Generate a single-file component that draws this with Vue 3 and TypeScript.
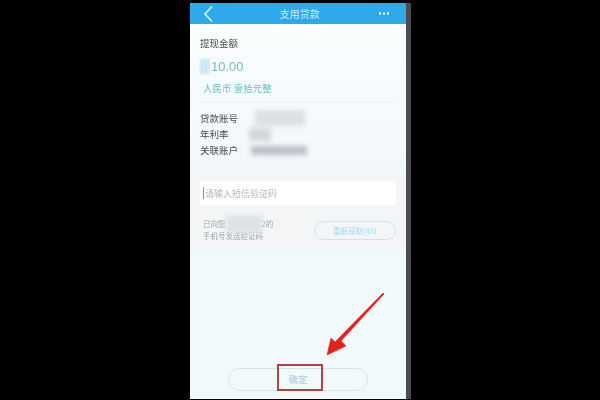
<script setup lang="ts">
const rows = [
  { label: '贷款账号', blur: 'w-a' },
  { label: '年利率', blur: 'w-b' },
  { label: '关联账户', blur: 'w-c' },
]
</script>

<template>
  <div class="page">
    <div class="phone">
      <header class="nav">
        <svg class="back" width="12" height="18" viewBox="0 0 12 18">
          <path d="M10 1.5 L3 9 L10 16.5" fill="none" stroke="#cfeefb" stroke-width="1.8" />
        </svg>
        <span class="title">支用贷款</span>
        <span class="more"><i></i><i></i><i></i></span>
      </header>

      <section class="summary">
        <div class="caption">提现金额</div>
        <div class="amount"><span class="mask"></span>10.00</div>
        <div class="cn">人民币 壹拾元整</div>
        <div class="rule"></div>
        <div v-for="row in rows" :key="row.label" class="row">
          <span class="label">{{ row.label }}</span>
          <span class="smudge" :class="row.blur"></span>
        </div>
      </section>

      <section class="verify">
        <div class="field"><span class="cursor"></span><span class="hint">请输入短信验证码</span></div>
        <div class="sms">
          <div class="sms-text">
            <div>已向您<span class="sms-mask"></span>2的</div>
            <div>手机号发送验证码</div>
          </div>
          <div class="resend">重新获取(45)</div>
        </div>
      </section>

      <footer class="actions">
        <div class="confirm">确定</div>
      </footer>

      <svg class="arrow" width="70" height="70" viewBox="0 0 70 70">
        <path d="M65 3 L22 50 L27 55 L8 64 L12 47 L16 51 L64 2 Z" fill="#e0231f" stroke="#e0231f" stroke-width="0.6" />
      </svg>
      <div class="highlight"></div>
    </div>
    <div class="edge"></div>
  </div>
</template>

<style>
html, body { margin: 0; background: #000; }
</style>

<style scoped>
.page {
  width: 600px;
  height: 400px;
  background: #000;
  display: flex;
  justify-content: center;
  padding: 3px 0 1px 1px;
  box-sizing: border-box;
  overflow: hidden;
  font-family: "Noto Sans CJK SC", "Liberation Sans", sans-serif;
}
.phone {
  position: relative;
  width: 216px;
  display: flex;
  flex-direction: column;
  background: #f1f9fb;
}
.edge {
  width: 5px;
  background: #4a4d50;
}
.nav {
  height: 21px;
  flex: none;
  background: #2ea9ea;
  display: flex;
  align-items: center;
  justify-content: space-between;
  padding: 0 17px 0 12px;
  color: #cfeefb;
  font-size: 10px;
}
.title { filter: blur(0.7px); margin-left: 7px; }
.more { display: flex; gap: 1.5px; filter: blur(0.3px); }
.more i { width: 2.5px; height: 2.5px; border-radius: 50%; background: #d8f2fd; }
.summary {
  height: 148px;
  flex: none;
  padding: 12px 10px 0;
  box-sizing: border-box;
  background: linear-gradient(#fbfdfe, #f1f8fb);
  color: #4a4a4a;
  font-size: 9.5px;
}
.caption { line-height: 14px; filter: blur(0.65px); }
.amount {
  display: flex;
  align-items: center;
  margin-top: 7px;
  height: 18px;
  font-size: 13px;
  color: #6fc2c4;
  filter: blur(0.5px);
  font-family: "Liberation Sans", sans-serif;
}
.mask {
  width: 10px;
  height: 15px;
  margin-right: 1px;
  background: #cfe8ef;
  filter: blur(0.8px);
}
.cn {
  margin: 6px 0 0 3px;
  line-height: 14px;
  color: #62bfc4;
  filter: blur(0.65px);
}
.rule { height: 1px; background: #eef1f2; margin-top: 7px; margin-bottom: 7px; }
.row {
  height: 16px;
  display: flex;
  align-items: center;
}
.label { width: 46px; flex: none; filter: blur(0.65px); }
.smudge { height: 13px; background: #c6cdd2; filter: blur(2.5px); }
.w-a { width: 50px; margin-left: 9px; background: #dde0e3; height: 16px; }
.w-b { width: 22px; margin-left: 3px; background: #d2d7da; }
.w-c { width: 56px; margin-left: 5px; height: 9px; background: #b9bfc4; }
.verify {
  height: 78px;
  flex: none;
  padding: 9px 10px 0;
  box-sizing: border-box;
  background: #f3f5f6;
}
.field {
  height: 24px;
  background: #fff;
  display: flex;
  align-items: center;
  padding-left: 3px;
  color: #b3b6b8;
  font-size: 9px;
}
.hint { filter: blur(0.6px); }
.cursor { width: 1px; height: 12px; background: #8b9298; margin-right: 1px; }
.sms {
  display: flex;
  justify-content: space-between;
  align-items: center;
  margin-top: 13px;
}
.sms-text {
  margin-left: 3px;
  color: #9ea3a6;
  font-size: 7.5px;
  line-height: 12px;
  filter: blur(0.5px);
}
.sms-text > div { display: flex; align-items: center; }
.sms-mask { width: 36px; height: 18px; margin: -3px 0; background: #dfe2e4; filter: blur(2px); }
.resend {
  width: 82px;
  height: 19px;
  box-sizing: border-box;
  border: 1px solid #cfe5ea;
  border-radius: 10px;
  color: #a0dcee;
  font-size: 7.5px;
  line-height: 17px;
  text-align: center;
  filter: blur(0.4px);
}
.actions {
  flex: 1;
  display: flex;
  align-items: flex-end;
  justify-content: center;
  padding-bottom: 8px;
  background: #f1f9fb;
}
.confirm {
  width: 140px;
  height: 23px;
  box-sizing: border-box;
  border: 1px solid #d5e6ea;
  border-radius: 12px;
  text-align: center;
  color: #a6cfd8;
  font-size: 9.5px;
  line-height: 21px;
}
.arrow {
  position: absolute;
  left: 129px;
  top: 288px;
  filter: blur(0.3px);
}
.highlight {
  position: absolute;
  left: 87px;
  top: 361px;
  width: 46px;
  height: 27px;
  box-sizing: border-box;
  border: 2px solid #b5403f;
}
</style>
